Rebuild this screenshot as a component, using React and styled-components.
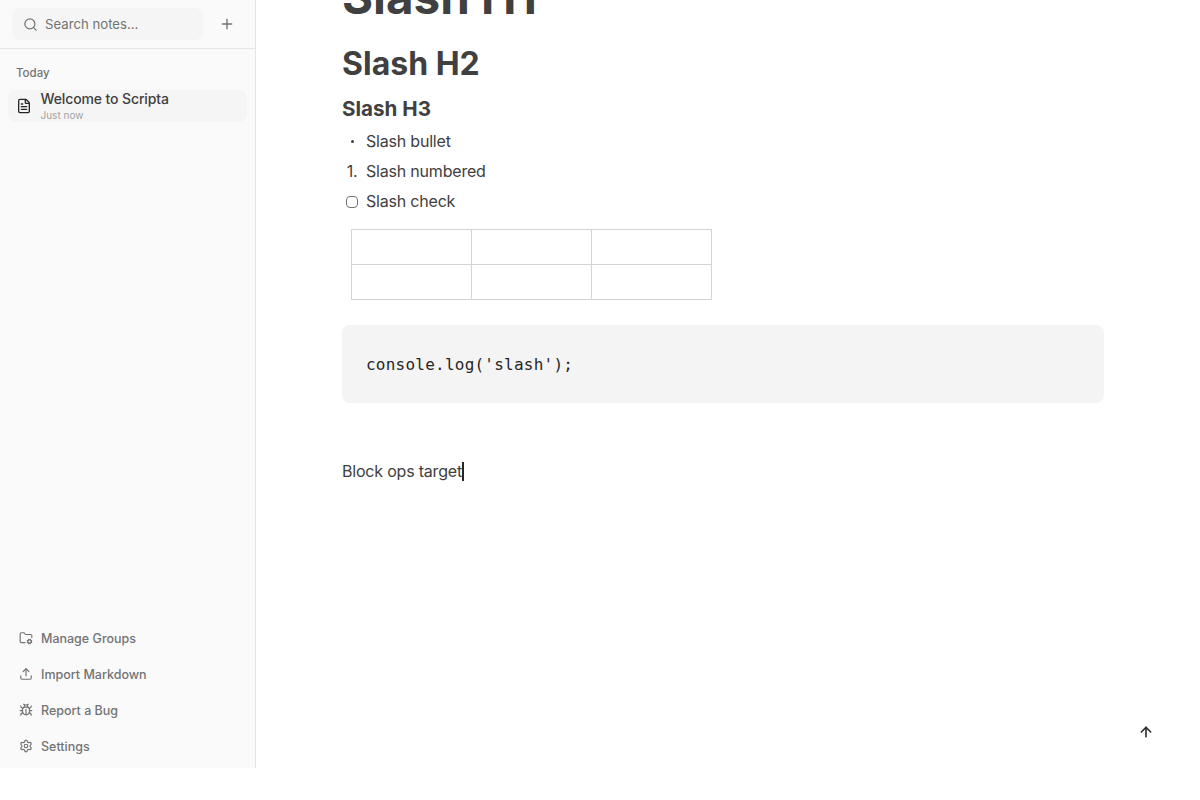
import React from "react";
import styled, { createGlobalStyle } from "styled-components";
import { ArrowUp, Bug, FileText, FolderCog, Plus, Search, Settings, Upload } from "lucide-react";

const GlobalStyle = createGlobalStyle`
  html, body {
    margin: 0;
    padding: 0;
    background: #ffffff;
  }
  body {
    font-family: Inter, "Liberation Sans", sans-serif;
    color: #404040;
  }
`;

const Layout = styled.div`
  display: flex;
  height: 768px;
  overflow: hidden;
`;

const Sidebar = styled.aside`
  box-sizing: border-box;
  width: 256px;
  flex-shrink: 0;
  display: flex;
  flex-direction: column;
  background: #fafafa;
  border-right: 1px solid #e5e5e5;
`;

const SearchRow = styled.div`
  box-sizing: border-box;
  height: 49px;
  display: flex;
  align-items: center;
  gap: 8px;
  padding: 0 12px;
  border-bottom: 1px solid #e5e5e5;
`;

const SearchBox = styled.div`
  width: 191px;
  height: 32px;
  box-sizing: border-box;
  display: flex;
  align-items: center;
  gap: 7px;
  padding-left: 11px;
  border-radius: 8px;
  background: #f5f5f5;
  color: #737373;
  font-size: 13.2px;
  line-height: 30px;
`;

const AddButton = styled.button`
  width: 32px;
  height: 32px;
  display: flex;
  align-items: center;
  justify-content: center;
  padding: 0;
  border: 0;
  background: none;
  color: #737373;
`;

const NoteList = styled.div`
  flex: 1;
  padding: 17px 8px 0;
`;

const GroupLabel = styled.div`
  padding-left: 8px;
  font-size: 11.5px;
  line-height: 15px;
  font-weight: 500;
  color: #737373;
  margin-bottom: 9px;
`;

const NoteItem = styled.div`
  height: 32px;
  box-sizing: border-box;
  display: flex;
  align-items: center;
  gap: 8.5px;
  padding-left: 8px;
  border-radius: 8px;
  background: #f5f5f5;
  color: #262626;
`;

const NoteText = styled.div`
  display: flex;
  flex-direction: column;
  gap: 1px;
`;

const NoteTitle = styled.div`
  font-size: 14px;
  line-height: 17px;
  font-weight: 500;
  letter-spacing: -0.12px;
  color: #404040;
`;

const NoteTime = styled.div`
  font-size: 10px;
  line-height: 14px;
  color: #a3a3a3;
`;

const FooterMenu = styled.nav`
  display: flex;
  flex-direction: column;
  padding: 0 0 4px 19px;
`;

const FooterItem = styled.div`
  height: 36px;
  display: flex;
  align-items: center;
  gap: 8px;
  font-size: 12.5px;
  font-weight: 500;
  color: #737373;
`;

const Main = styled.main`
  flex: 1;
  min-width: 0;
  position: relative;
  overflow: hidden;
`;

const Doc = styled.article`
  width: 762px;
  margin: -29px 0 0 86px;
`;

const H1 = styled.h1`
  margin: 0;
  font-size: 47.5px;
  line-height: 52px;
  font-weight: 700;
`;

const H2 = styled.h2`
  margin: 23px 0 0;
  font-size: 32px;
  line-height: 36px;
  font-weight: 700;
`;

const H3 = styled.h3`
  margin: 13px 0 3px;
  font-size: 20.6px;
  line-height: 28px;
  font-weight: 700;
`;

const ListRow = styled.div`
  height: 30px;
  display: flex;
  align-items: center;
  font-size: 16px;
  letter-spacing: -0.2px;
`;

const Marker = styled.span`
  width: 24px;
  display: flex;
  justify-content: center;
  padding-right: 4px;
  box-sizing: border-box;
`;

const Dot = styled.span`
  width: 3px;
  height: 3px;
  border-radius: 50%;
  background: #404040;
`;

const Box = styled.span`
  width: 10px;
  height: 10px;
  margin-top: 1px;
  border: 1px solid #737373;
  border-radius: 4px;
`;

const Table = styled.table`
  border-collapse: collapse;
  margin: 13px 0 0 9px;
  td {
    width: 119px;
    height: 34px;
    padding: 0;
    border: 1px solid #d4d4d4;
  }
`;

const CodeBlock = styled.pre`
  margin: 25px 0 0;
  padding: 29px 24px 27px;
  height: 22px;
  border-radius: 8px;
  background: #f4f4f4;
  font-family: "DejaVu Sans Mono", monospace;
  font-size: 16px;
  line-height: 22px;
  letter-spacing: 0.23px;
  color: #262626;
`;

const Paragraph = styled.p`
  margin: 56px 0 0;
  font-size: 16px;
  line-height: 24px;
  letter-spacing: -0.2px;
`;

const Caret = styled.span`
  display: inline-block;
  width: 2px;
  height: 19px;
  vertical-align: -4px;
  background: #262626;
`;

const ScrollTop = styled.button`
  position: absolute;
  right: 46px;
  bottom: 28px;
  display: flex;
  padding: 0;
  border: 0;
  background: none;
  color: #333333;
`;

const footerItems = [
  { Icon: FolderCog, label: "Manage Groups" },
  { Icon: Upload, label: "Import Markdown" },
  { Icon: Bug, label: "Report a Bug" },
  { Icon: Settings, label: "Settings" },
];

export default function App() {
  return (
    <Layout>
      <GlobalStyle />
      <Sidebar>
        <SearchRow>
          <SearchBox>
            <Search size={15} />
            Search notes...
          </SearchBox>
          <AddButton>
            <Plus size={16} />
          </AddButton>
        </SearchRow>
        <NoteList>
          <GroupLabel>Today</GroupLabel>
          <NoteItem>
            <FileText size={16} />
            <NoteText>
              <NoteTitle>Welcome to Scripta</NoteTitle>
              <NoteTime>Just now</NoteTime>
            </NoteText>
          </NoteItem>
        </NoteList>
        <FooterMenu>
          {footerItems.map(({ Icon, label }) => (
            <FooterItem key={label}>
              <Icon size={14} />
              {label}
            </FooterItem>
          ))}
        </FooterMenu>
      </Sidebar>
      <Main>
        <Doc>
          <H1>Slash H1</H1>
          <H2>Slash H2</H2>
          <H3>Slash H3</H3>
          <ListRow>
            <Marker><Dot /></Marker>Slash bullet
          </ListRow>
          <ListRow>
            <Marker>1.</Marker>Slash numbered
          </ListRow>
          <ListRow>
            <Marker>
              <Box />
            </Marker>
            Slash check
          </ListRow>
          <Table>
            <tbody>
              <tr><td /><td /><td /></tr>
              <tr><td /><td /><td /></tr>
            </tbody>
          </Table>
          <CodeBlock>console.log('slash');</CodeBlock>
          <Paragraph>
            Block ops target
            <Caret />
          </Paragraph>
        </Doc>
        <ScrollTop>
          <ArrowUp size={16} strokeWidth={2.5} />
        </ScrollTop>
      </Main>
    </Layout>
  );
}
